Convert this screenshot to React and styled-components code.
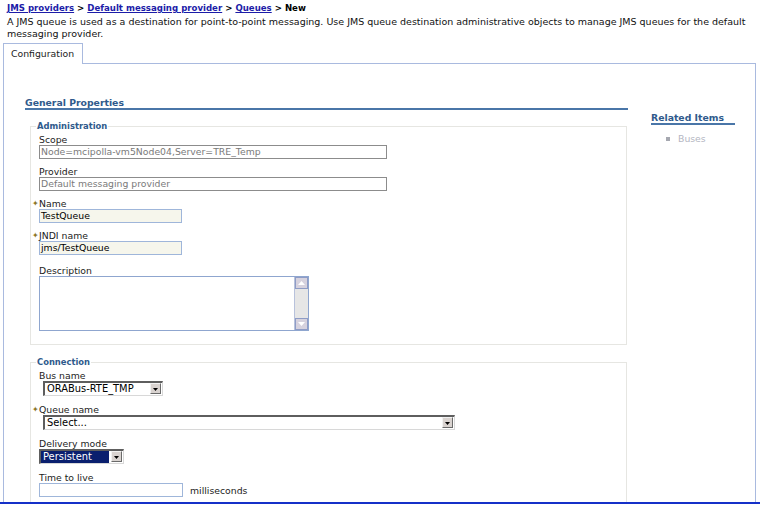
import React from "react";
import styled, { createGlobalStyle } from "styled-components";

const GlobalStyle = createGlobalStyle`
  html, body {
    margin: 0;
    padding: 0;
    background: #fff;
  }
  body {
    font-family: "DejaVu Sans", Verdana, sans-serif;
    font-size: 9.3px;
    color: #000;
  }
`;

const Frame = styled.div`
  width: 760px;
  height: 504px;
  box-sizing: border-box;
  border-bottom: 2px solid #1530c8;
  display: flex;
  flex-direction: column;
  overflow: hidden;
`;

const Breadcrumb = styled.div`
  font-weight: bold;
  font-size: 8.6px;
  line-height: 12px;
  padding: 2px 0 0 7px;
`;

const Crumb = styled.a`
  color: #1c1ca8;
  text-decoration: underline;
`;

const Intro = styled.p`
  margin: 2px 0 0 7px;
  font-size: 9.5px;
  line-height: 12px;
  width: 750px;
  color: #111;
`;

const Tabs = styled.div`
  display: flex;
  margin: 3px 0 0 3px;
`;

const Tab = styled.div`
  position: relative;
  z-index: 1;
  margin-bottom: -1px;
  padding: 0 8px 0 7px;
  line-height: 20px;
  background: #fff;
  border: 1px solid #a9badf;
  border-bottom: none;
  color: #222;
`;

const Panel = styled.div`
  flex: 1;
  min-height: 0;
  margin-left: 3px;
  width: 753px;
  box-sizing: border-box;
  border: 1px solid #a9badf;
  border-bottom: none;
  display: flex;
`;

const Main = styled.div`
  width: 603px;
  padding: 34px 0 0 21px;
`;

const SectionTitle = styled.div`
  font-weight: bold;
  color: #2f5a8c;
  line-height: 10px;
  border-bottom: 2px solid #4a76a8;
`;

const Fieldset = styled.fieldset`
  margin: ${(p) => p.$top}px 1px 0 5px;
  padding: 3px 8px ${(p) => p.$bottom}px 8px;
  border: 1px solid #e6e6e2;
  min-width: 0;
`;

const Legend = styled.legend`
  font-weight: bold;
  font-size: 8.4px;
  color: #2f5a8c;
  line-height: 10px;
  padding: 0 1px;
  margin-left: -3px;
`;

const Field = styled.div`
  margin-bottom: ${(p) => (p.$space != null ? p.$space : 7)}px;
`;

const Label = styled.label`
  display: block;
  height: 11px;
  line-height: 11px;
  color: #222;
`;

const Star = styled.span`
  display: inline-block;
  width: 7px;
  margin-left: -7px;
  line-height: 11px;
  vertical-align: top;
  color: #8a7428;
  font-size: 8px;
`;

const TextInput = styled.div`
  box-sizing: border-box;
  width: ${(p) => p.$w}px;
  height: 14px;
  line-height: 12px;
  padding: 0 1px;
  border: 1px solid ${(p) => (p.$readonly ? "#8c8c8c" : "#9fb6da")};
  background: ${(p) => (p.$fill ? "#f6f6ec" : "#fff")};
  color: ${(p) => (p.$readonly ? "#7a7a7a" : "#000")};
  white-space: nowrap;
  overflow: hidden;
`;

const InputRow = styled.div`
  display: flex;
  align-items: flex-end;
  gap: 7px;
`;

const Unit = styled.span`
  line-height: 12px;
  color: #222;
`;

const TextArea = styled.div`
  box-sizing: border-box;
  width: 270px;
  height: 55px;
  border: 1px solid #8fa6cf;
  background: #fff;
  display: flex;
  justify-content: flex-end;
`;

const ScrollBar = styled.div`
  width: 13px;
  display: flex;
  flex-direction: column;
  background: #e6e6e6;
  border-left: 1px solid #b8c2dc;
`;

const ScrollButton = styled.div`
  height: 12px;
  box-sizing: border-box;
  border: 1px solid #8e9cc6;
  background: #d6d2de;
  display: flex;
  align-items: center;
  justify-content: center;
`;

const ScrollTrack = styled.div`
  flex: 1;
`;

const Select = styled.div`
  box-sizing: border-box;
  width: ${(p) => p.$w}px;
  height: 15px;
  margin-left: ${(p) => p.$indent || 0}px;
  display: flex;
  align-items: stretch;
  border-top: 2px solid #5e5e5e;
  border-left: 2px solid #5e5e5e;
  border-right: 1px solid #d8d8d8;
  border-bottom: 1px solid #d8d8d8;
  background: #fff;
  font-size: 9.9px;
`;

const SelectValue = styled.div`
  flex: 1;
  line-height: 12px;
  padding: 0 2px;
  margin-right: 2px;
  color: ${(p) => (p.$selected ? "#fff" : "#000")};
  background: ${(p) => (p.$selected ? "#0a1f6e" : "transparent")};
  white-space: nowrap;
  overflow: hidden;
`;

const SelectButton = styled.div`
  width: 11px;
  box-sizing: border-box;
  margin: 0 1px 1px 0;
  background: #d9d3d0;
  border: 1px solid;
  border-color: #f2f2f2 #6a6a6a #6a6a6a #f2f2f2;
  display: flex;
  align-items: center;
  justify-content: center;
`;

const Side = styled.div`
  padding: 48px 0 0 23px;
`;

const SideTitle = styled.div`
  width: 84px;
  font-weight: bold;
  color: #2f5a8c;
  line-height: 11px;
  border-bottom: 2px solid #4a76a8;
`;

const SideList = styled.ul`
  list-style: none;
  margin: 8px 0 0 15px;
  padding: 0;
`;

const SideItem = styled.li`
  display: flex;
  align-items: center;
  gap: 8px;
  line-height: 11px;
  color: #b4b6c2;
`;

const Bullet = styled.span`
  width: 4px;
  height: 4px;
  background: #a6a8b0;
`;

const Arrow = ({ up, color = "#000" }) => (
  <svg width="7" height="4" viewBox="0 0 7 4">
    <path d={up ? "M0 4 L3.5 0 L7 4 Z" : "M0 0 L7 0 L3.5 4 Z"} fill={color} />
  </svg>
);

const Dropdown = ({ value, width, indent, selected }) => (
  <Select $w={width} $indent={indent}>
    <SelectValue $selected={selected}>{value}</SelectValue>
    <SelectButton>
      <svg width="5" height="4" viewBox="0 0 5 4">
        <path d="M0 1 L5 1 L2.5 4 Z" fill="#000" />
      </svg>
    </SelectButton>
  </Select>
);

const App = () => {
  return (
    <>
      <GlobalStyle />
      <Frame>
        <Breadcrumb>
          <Crumb>JMS providers</Crumb> &gt; <Crumb>Default messaging provider</Crumb> &gt;{" "}
          <Crumb>Queues</Crumb> &gt; New
        </Breadcrumb>
        <Intro>
          A JMS queue is used as a destination for point-to-point messaging. Use JMS queue
          destination administrative objects to manage JMS queues for the default messaging
          provider.
        </Intro>
        <Tabs>
          <Tab>Configuration</Tab>
        </Tabs>
        <Panel>
          <Main>
            <SectionTitle>General Properties</SectionTitle>
            <Fieldset $top={11} $bottom={13}>
              <Legend>Administration</Legend>
              <Field>
                <Label>Scope</Label>
                <TextInput $w={348} $readonly>
                  Node=mcipolla-vm5Node04,Server=TRE_Temp
                </TextInput>
              </Field>
              <Field>
                <Label>Provider</Label>
                <TextInput $w={348} $readonly>
                  Default messaging provider
                </TextInput>
              </Field>
              <Field>
                <Label>
                  <Star>✦</Star>Name
                </Label>
                <TextInput $w={143} $fill>
                  TestQueue
                </TextInput>
              </Field>
              <Field $space={10}>
                <Label>
                  <Star>✦</Star>JNDI name
                </Label>
                <TextInput $w={143} $fill>
                  jms/TestQueue
                </TextInput>
              </Field>
              <Field $space={0}>
                <Label>Description</Label>
                <TextArea>
                  <ScrollBar>
                    <ScrollButton>
                      <Arrow up color="#fff" />
                    </ScrollButton>
                    <ScrollTrack />
                    <ScrollButton>
                      <Arrow color="#fff" />
                    </ScrollButton>
                  </ScrollBar>
                </TextArea>
              </Field>
            </Fieldset>
            <Fieldset $top={12} $bottom={20}>
              <Legend>Connection</Legend>
              <Field $space={8}>
                <Label>Bus name</Label>
                <Dropdown value="ORABus-RTE_TMP" width={120} indent={4} />
              </Field>
              <Field $space={8}>
                <Label>
                  <Star>✦</Star>Queue name
                </Label>
                <Dropdown value="Select..." width={412} indent={4} />
              </Field>
              <Field $space={8}>
                <Label>Delivery mode</Label>
                <Dropdown value="Persistent" width={85} selected />
              </Field>
              <Field $space={8}>
                <Label>Time to live</Label>
                <InputRow>
                  <TextInput $w={144} />
                  <Unit>milliseconds</Unit>
                </InputRow>
              </Field>
            </Fieldset>
          </Main>
          <Side>
            <SideTitle>Related Items</SideTitle>
            <SideList>
              <SideItem>
                <Bullet />
                Buses
              </SideItem>
            </SideList>
          </Side>
        </Panel>
      </Frame>
    </>
  );
};

export default App;
